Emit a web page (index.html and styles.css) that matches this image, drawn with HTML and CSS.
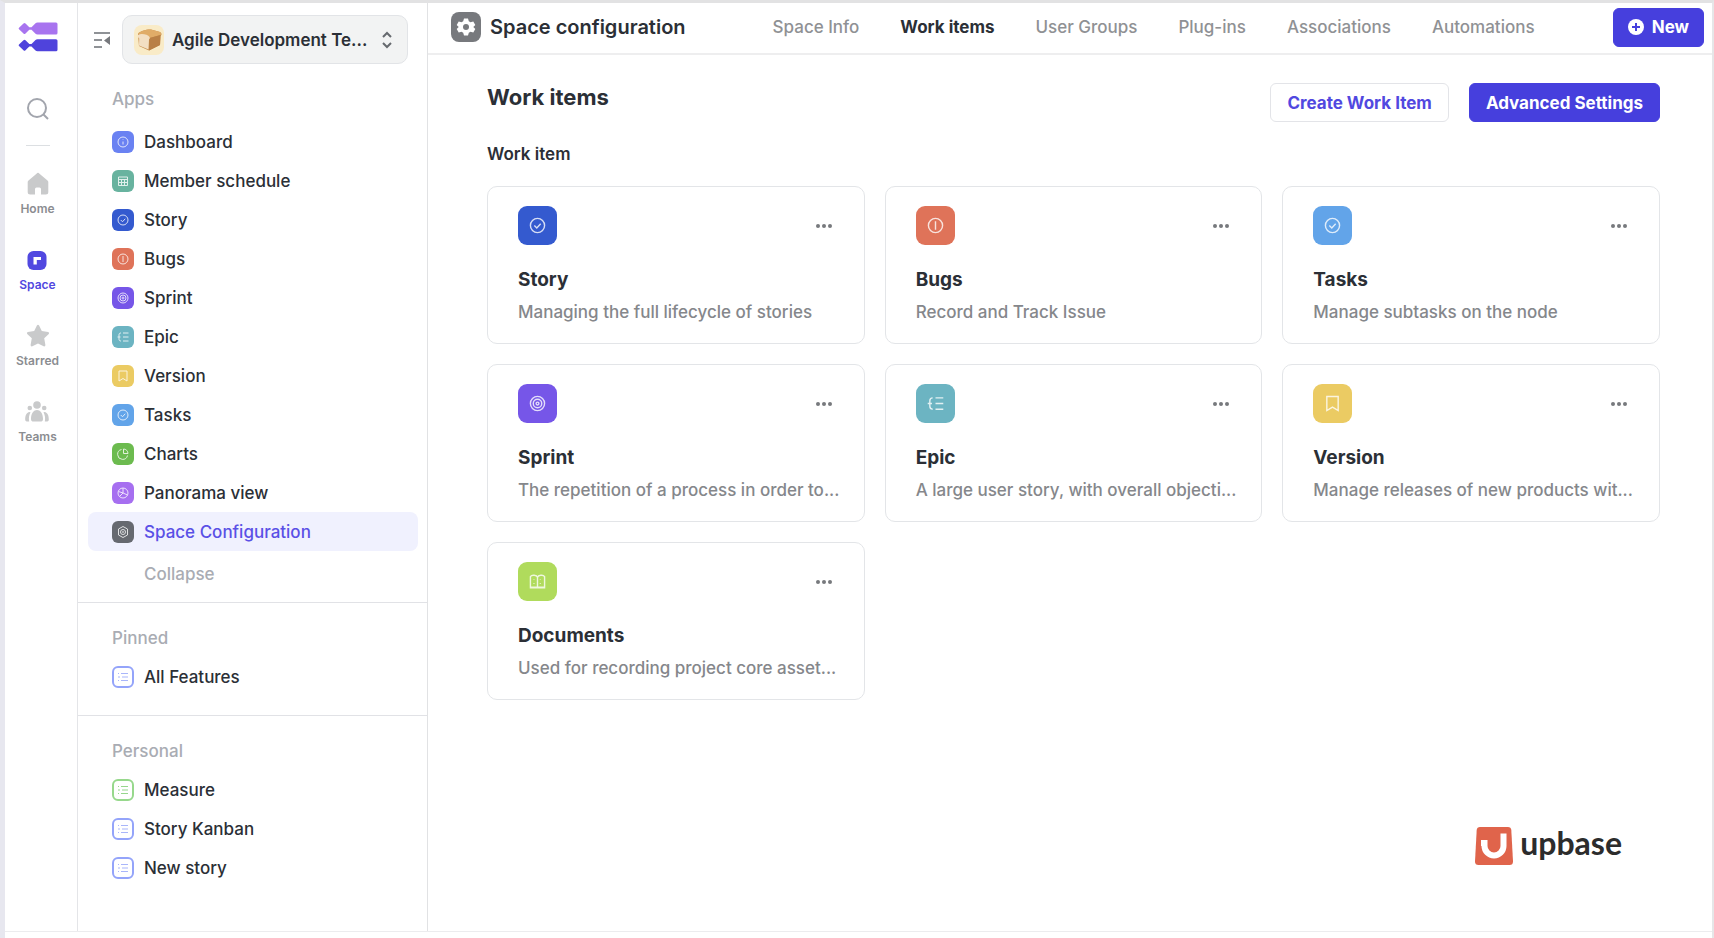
FILE: index.html
```html
<!DOCTYPE html>
<html lang="en">

<head>
    <meta charset="UTF-8">
    <meta name="viewport" content="width=device-width, initial-scale=1.0">
    <title>Space configuration</title>
    <link rel="stylesheet" href="styles.css">
</head>

<body>
    <!-- Shared icon shapes -->
    <svg class="icon-defs" aria-hidden="true">
        <symbol id="i-info" viewBox="0 0 24 24"><circle cx="12" cy="12" r="10"/><path d="M12 11v6M12 7v1"/></symbol>
        <symbol id="i-calendar" viewBox="0 0 24 24"><path d="M3 4h18v17H3zM3 9h18M3 15h18M9 9v12M15 9v12"/></symbol>
        <symbol id="i-check" viewBox="0 0 24 24"><circle cx="12" cy="12" r="10"/><path d="M7.500 12l3.500 3.500 5.500-6"/></symbol>
        <symbol id="i-alert" viewBox="0 0 24 24"><circle cx="12" cy="12" r="10"/><path d="M12 6v12"/></symbol>
        <symbol id="i-target" viewBox="0 0 24 24"><circle cx="12" cy="12" r="10"/><circle cx="12" cy="12" r="6"/><circle cx="12" cy="12" r="2"/></symbol>
        <symbol id="i-tree" viewBox="0 0 24 24"><path d="M8 4c-3 0-4 1-4 4v8c0 3 1 4 4 4M1 12h6M12 4h11M12 12h11M12 20h11"/></symbol>
        <symbol id="i-bookmark" viewBox="0 0 24 24"><path d="M4 2h16v20l-8-5-8 5z"/></symbol>
        <symbol id="i-pie" viewBox="0 0 24 24"><path d="M9 3a10 10 0 1 0 12 12M13 2v9h9a9 9 0 0 0-9-9z"/></symbol>
        <symbol id="i-panorama" viewBox="0 0 24 24"><circle cx="12" cy="12" r="10"/><path d="M12 2v10l9 4M12 12l-7 7M3 9l9 3"/></symbol>
        <symbol id="i-hex" viewBox="0 0 24 24"><path d="M12 1l9 5v12l-9 5-9-5V6z"/><circle cx="12" cy="12" r="5"/><circle cx="12" cy="12" r="1"/></symbol>
        <symbol id="i-list" viewBox="0 0 24 24"><path d="M2 5h2M8 5h14M2 12h4M10 12h12M2 19h2M8 19h14"/></symbol>
        <symbol id="i-book" viewBox="0 0 24 24"><path d="M12 20V6c-1-3-8-4-10-1v15h20V5c-2-3-9-2-10 1M1 21h22M7 9v1M7 14v1M16 9v1M16 14v1"/></symbol>
        <symbol id="i-dots" viewBox="0 0 18 6"><circle cx="3" cy="3" r="2"/><circle cx="9" cy="3" r="2"/><circle cx="15" cy="3" r="2"/></symbol>
    </svg>

    <div class="app">
        <nav class="rail" aria-label="Main">
            <a class="brand" href="#" aria-label="Home page">
                <svg viewBox="0 0 40 30" width="40" height="30">
                    <path fill="#a874ef" d="M5.500 1.500q1-1 2 0l3.800 3.800h2.200L17.500 1.300q.8-.8 2-.8H38q1.500 0 1.500 1.500v9q0 1.500-1.500 1.500H19.500q-1.200 0-2-.8L13.500 7.700h-2.200L7.500 11.500q-1 1-2 0L1 7.300q-.8-.8 0-1.600z"/>
                    <path fill="#4f43dc" d="M5.500 18.200q1-1 2 0l3.800 3.800h2.200L17.500 18q.8-.8 2-.8H38q1.500 0 1.500 1.500v9q0 1.500-1.500 1.500H19.500q-1.200 0-2-.8L13.500 24.400h-2.200L7.500 28.200q-1 1-2 0L1 24q-.8-.8 0-1.600z"/>
                </svg>
            </a>
            <button class="rail-search" type="button" aria-label="Search">
                <svg viewBox="0 0 24 24" width="24" height="24"><circle cx="11" cy="11" r="9"/><path d="M17.500 17.500L22 22"/></svg>
            </button>
            <a class="rail-item" href="#">
                <svg viewBox="0 0 24 24" width="24" height="24"><path d="M10.500 1.700a2 2 0 0 1 3 0l8 6.800a2 2 0 0 1 .8 1.600V20a2.500 2.500 0 0 1-2.500 2.500H15V17a1.500 1.500 0 0 0-1.500-1.500h-3A1.500 1.500 0 0 0 9 17v5.500H4.200A2.500 2.500 0 0 1 1.700 20v-9.900a2 2 0 0 1 .8-1.600z"/></svg>
                <span>Home</span>
            </a>
            <a class="rail-item active" href="#">
                <svg viewBox="0 0 24 24" width="24" height="24"><rect x="2.500" y="3" width="19" height="19" rx="6"/><path fill="#fff" d="M8.500 9h7.500v3h-4.200v4.500H8.500z"/></svg>
                <span>Space</span>
            </a>
            <a class="rail-item" href="#">
                <svg viewBox="0 0 24 24" width="24" height="24"><path d="M10.900 1.500q1.100-1.400 2.200 0l2.700 5.600 6.300.9q1.700.5.700 1.900l-4.600 4.400 1.200 6.700q0 1.800-1.800 1.300L12 19.500l-5.600 2.800q-1.800.5-1.800-1.300l1.200-6.700L1.200 9.900q-1-1.400.7-1.900l6.300-.9z"/></svg>
                <span>Starred</span>
            </a>
            <a class="rail-item" href="#">
                <svg viewBox="0 0 24 24" width="24" height="24"><circle cx="12" cy="5" r="3.800"/><circle cx="4.800" cy="8" r="2.300"/><circle cx="19.200" cy="8" r="2.300"/><path d="M6 19c0-12 12-12 12 0 0 2-1 2.500-2.500 2.500h-7C7 21.500 6 21 6 19zM4.600 12C1 12.500.2 16 .2 19.500c0 1.500.8 2 2.600 2h1.400C3.500 18 4 15 5.500 12.200zM19.400 12c3.600.5 4.400 4 4.400 7.500 0 1.500-.8 2-2.600 2h-1.400c.7-3.500.2-6.500-1.300-9.300z"/></svg>
                <span>Teams</span>
            </a>
        </nav>

        <aside class="sidebar">
            <div class="sidebar-top">
                <button class="fold" type="button" aria-label="Fold sidebar">
                    <svg viewBox="0 0 18 18" width="18" height="18"><path d="M1 2h16M1 9h8M1 16h8" fill="none" stroke="#8f9296" stroke-width="2"/><path d="M17 5v9l-6-4.500z" fill="#77797d"/></svg>
                </button>
                <button class="switcher" type="button">
                    <svg viewBox="0 0 30 30" width="30" height="30">
                        <rect width="30" height="30" rx="8" fill="#f9ebc7"/>
                        <path fill="#c58a49" d="M4 9c1-3 10-5 13-4.500l9 2.500c2 1 2 3 .5 4L26 20l-11 5.500L5 21z"/>
                        <path fill="#e0ac68" d="M4 9c1-3 10-5 13-4.500l9 2.500c1 .8 1.500 2 .5 3L16 13z"/>
                        <path fill="#b98046" d="M15.500 13l11-3L26 20l-11 5.500z"/>
                        <path fill="#f3dfc3" d="M4 10c3-2 10-.5 11.500 2 .6 1 .2 2-.5 2.500l-.5 10L5 20.500l.2-7C4 12.500 3.500 11 4 10z"/>
                    </svg>
                    <span>Agile Development Te...</span>
                    <svg viewBox="0 0 12 18" width="12" height="18"><path d="M2 6l4-4 4 4M2 12l4 4 4-4" fill="none" stroke="#66696e" stroke-width="2"/></svg>
                </button>
            </div>

            <section class="menu apps">
                <h2>Apps</h2>
                <ul>
                    <li><a href="#"><span class="tile indigo"><svg><use href="#i-info"/></svg></span>Dashboard</a></li>
                    <li><a href="#"><span class="tile teal"><svg><use href="#i-calendar"/></svg></span>Member schedule</a></li>
                    <li><a href="#"><span class="tile blue"><svg><use href="#i-check"/></svg></span>Story</a></li>
                    <li><a href="#"><span class="tile red"><svg><use href="#i-alert"/></svg></span>Bugs</a></li>
                    <li><a href="#"><span class="tile violet"><svg><use href="#i-target"/></svg></span>Sprint</a></li>
                    <li><a href="#"><span class="tile cyan"><svg><use href="#i-tree"/></svg></span>Epic</a></li>
                    <li><a href="#"><span class="tile yellow"><svg><use href="#i-bookmark"/></svg></span>Version</a></li>
                    <li><a href="#"><span class="tile sky"><svg><use href="#i-check"/></svg></span>Tasks</a></li>
                    <li><a href="#"><span class="tile green"><svg><use href="#i-pie"/></svg></span>Charts</a></li>
                    <li><a href="#"><span class="tile purple"><svg><use href="#i-panorama"/></svg></span>Panorama view</a></li>
                    <li><a class="active" href="#"><span class="tile gray"><svg><use href="#i-hex"/></svg></span>Space Configuration</a></li>
                </ul>
                <button class="collapse" type="button">Collapse</button>
            </section>

            <section class="menu">
                <h2>Pinned</h2>
                <ul>
                    <li><a href="#"><span class="tile outline"><svg><use href="#i-list"/></svg></span>All Features</a></li>
                </ul>
            </section>

            <section class="menu">
                <h2>Personal</h2>
                <ul>
                    <li><a href="#"><span class="tile outline mint"><svg><use href="#i-list"/></svg></span>Measure</a></li>
                    <li><a href="#"><span class="tile outline"><svg><use href="#i-list"/></svg></span>Story Kanban</a></li>
                    <li><a href="#"><span class="tile outline"><svg><use href="#i-list"/></svg></span>New story</a></li>
                </ul>
            </section>
        </aside>

        <main class="main">
            <header class="topbar">
                <svg class="gear" viewBox="0 0 30 30" width="30" height="30">
                    <rect width="30" height="30" rx="8" fill="#77797d"/>
                    <path fill="#fff" d="M13 6.500h4l.8 2.700 1.700 1 2.800-.7 2 3.500-2 2 0 0 2 2-2 3.500-2.800-.7-1.700 1-.8 2.700h-4l-.8-2.700-1.700-1-2.800.7-2-3.500 2-2-2-2 2-3.500 2.800.7 1.700-1z"/>
                    <circle cx="15" cy="15" r="3" fill="#77797d"/>
                </svg>
                <h1>Space configuration</h1>
                <nav class="tabs" aria-label="Configuration">
                    <a href="#">Space Info</a>
                    <a class="active" href="#">Work items</a>
                    <a href="#">User Groups</a>
                    <a href="#">Plug-ins</a>
                    <a href="#">Associations</a>
                    <a href="#">Automations</a>
                </nav>
                <button class="btn primary new" type="button">
                    <svg viewBox="0 0 16 16" width="16" height="16"><circle cx="8" cy="8" r="8" fill="#fff"/><path d="M8 4v8M4 8h8" stroke="#463fdd" stroke-width="2"/></svg>
                    New
                </button>
            </header>

            <div class="content">
                <div class="page-head">
                    <h2>Work items</h2>
                    <div class="actions">
                        <button class="btn" type="button">Create Work Item</button>
                        <button class="btn primary" type="button">Advanced Settings</button>
                    </div>
                </div>

                <h3 class="group-title">Work item</h3>
                <div class="cards">
                    <article class="card">
                        <div class="card-top">
                            <span class="tile large blue"><svg><use href="#i-check"/></svg></span>
                            <button class="more" type="button" aria-label="More"><svg><use href="#i-dots"/></svg></button>
                        </div>
                        <h4>Story</h4>
                        <p>Managing the full lifecycle of stories</p>
                    </article>
                    <article class="card">
                        <div class="card-top">
                            <span class="tile large red"><svg><use href="#i-alert"/></svg></span>
                            <button class="more" type="button" aria-label="More"><svg><use href="#i-dots"/></svg></button>
                        </div>
                        <h4>Bugs</h4>
                        <p>Record and Track Issue</p>
                    </article>
                    <article class="card">
                        <div class="card-top">
                            <span class="tile large sky"><svg><use href="#i-check"/></svg></span>
                            <button class="more" type="button" aria-label="More"><svg><use href="#i-dots"/></svg></button>
                        </div>
                        <h4>Tasks</h4>
                        <p>Manage subtasks on the node</p>
                    </article>
                    <article class="card">
                        <div class="card-top">
                            <span class="tile large violet"><svg><use href="#i-target"/></svg></span>
                            <button class="more" type="button" aria-label="More"><svg><use href="#i-dots"/></svg></button>
                        </div>
                        <h4>Sprint</h4>
                        <p>The repetition of a process in order to...</p>
                    </article>
                    <article class="card">
                        <div class="card-top">
                            <span class="tile large cyan"><svg><use href="#i-tree"/></svg></span>
                            <button class="more" type="button" aria-label="More"><svg><use href="#i-dots"/></svg></button>
                        </div>
                        <h4>Epic</h4>
                        <p>A large user story, with overall objecti...</p>
                    </article>
                    <article class="card">
                        <div class="card-top">
                            <span class="tile large yellow"><svg><use href="#i-bookmark"/></svg></span>
                            <button class="more" type="button" aria-label="More"><svg><use href="#i-dots"/></svg></button>
                        </div>
                        <h4>Version</h4>
                        <p>Manage releases of new products wit...</p>
                    </article>
                    <article class="card">
                        <div class="card-top">
                            <span class="tile large lime"><svg><use href="#i-book"/></svg></span>
                            <button class="more" type="button" aria-label="More"><svg><use href="#i-dots"/></svg></button>
                        </div>
                        <h4>Documents</h4>
                        <p>Used for recording project core asset...</p>
                    </article>
                </div>
            </div>

            <footer class="upbase">
                <svg viewBox="0 0 38 38" width="38" height="38">
                    <path fill="#e0644b" d="M5 0h28q3 0 3.300 3L38 34.500q0 3.500-3.500 3.500h-31Q0 38 0 34.500L1.700 3Q2 0 5 0z"/>
                    <path fill="none" stroke="#fff" stroke-width="6" d="M6 16h3.500v3a9.500 9.500 0 0 0 19 0V6.500"/>
                </svg>
                <span>upbase</span>
            </footer>
        </main>
    </div>
</body>

</html>
```
FILE: styles.css
```css
* {
    box-sizing: border-box;
}

body {
    margin: 0;
    padding-bottom: 6px;
    border-top: 3px solid #e2e2e3;
    border-left: 5px solid #e7e7ef;
    border-right: 2px solid #e6e6e8;
    background: #fff;
    color: #2b2f36;
    font-family: Inter, "Open Sans", sans-serif;
    font-size: 17px;
    font-weight: 500;
    line-height: 24px;
    min-height: 100vh;
    display: flex;
}

h1,
h2,
h3,
h4,
p,
ul {
    margin: 0;
    padding: 0;
}

ul {
    list-style: none;
}

a {
    color: inherit;
    text-decoration: none;
}

button {
    font: inherit;
    color: inherit;
    background: none;
    border: none;
    padding: 0;
    cursor: pointer;
}

svg {
    display: block;
    flex-shrink: 0;
}

.icon-defs {
    position: absolute;
    width: 0;
    height: 0;
}

.app {
    flex: 1;
    display: flex;
    border-bottom: 1px solid #ececee;
}

/* Left rail */
.rail {
    width: 73px;
    flex-shrink: 0;
    border-right: 1px solid #e4e5e8;
    display: flex;
    flex-direction: column;
    align-items: center;
    padding: 19px 7px 0 0;
}

.rail-search {
    margin-top: 45px;
    padding-bottom: 24px;
    border-bottom: 1px solid #dcdfe2;
}

.rail-search svg {
    fill: none;
    stroke: #a2a5ad;
    stroke-width: 2;
}

.rail-item {
    display: flex;
    flex-direction: column;
    align-items: center;
    gap: 5px;
    height: 76px;
    font-size: 12px;
    font-weight: 600;
    line-height: 16px;
    color: #8b8d91;
}

.rail-search + .rail-item {
    margin-top: 26px;
}

.rail-item svg {
    fill: #c9cacb;
}

.rail-item.active {
    color: #5148e0;
}

.rail-item.active svg {
    fill: #5148e0;
}

/* Sidebar */
.sidebar {
    width: 350px;
    flex-shrink: 0;
    border-right: 1px solid #e1e2e4;
}

.sidebar-top {
    display: flex;
    align-items: center;
    gap: 11px;
    padding: 12px 19px 12px 15px;
}

.switcher {
    flex: 1;
    height: 49px;
    display: flex;
    align-items: center;
    gap: 8px;
    padding: 0 14px 0 11px;
    background: #f2f3f3;
    border: 1px solid #e2e4e7;
    border-radius: 10px;
    font-weight: 600;
    white-space: nowrap;
}

.switcher span {
    flex: 1;
    text-align: left;
}

.menu {
    padding: 21px 9px 19px 10px;
}

.menu.apps {
    padding-top: 9px;
    padding-bottom: 16px;
}

.menu + .menu {
    border-top: 1px solid #e1e2e6;
}

.menu h2 {
    margin-bottom: 5px;
    padding: 0 24px;
    font-size: 17px;
    font-weight: 500;
    line-height: 28px;
    color: #a9acb3;
}

.menu.apps h2 {
    margin-bottom: 9px;
}

.menu li a {
    display: flex;
    align-items: center;
    gap: 10px;
    height: 39px;
    padding: 0 24px;
    border-radius: 8px;
}

.menu li a.active {
    background: #f0f1fe;
    color: #5a50e6;
}

.collapse {
    display: block;
    margin: 11px 0 0 56px;
    color: #a9acb3;
}

/* Coloured icon tiles */
.tile {
    width: 22px;
    height: 22px;
    flex-shrink: 0;
    border-radius: 6px;
    display: flex;
    align-items: center;
    justify-content: center;
}

.tile svg {
    width: 12px;
    height: 12px;
    fill: none;
    stroke: #fff;
    stroke-width: 2;
    opacity: 0.8;
}

.tile.large {
    width: 39px;
    height: 39px;
    border-radius: 9px;
}

.tile.large svg {
    width: 17px;
    height: 17px;
}

.indigo { background: #6a82f2; }
.teal { background: #68b39f; }
.blue { background: #345acf; }
.red { background: #df7359; }
.violet { background: #7656e8; }
.cyan { background: #6cb4c2; }
.yellow { background: #ebcb63; }
.sky { background: #62a4e9; }
.green { background: #6cbb4f; }
.purple { background: #a66ff0; }
.gray { background: #666970; }
.lime { background: #b0db5c; }

.tile.outline {
    border: 2px solid #94a4fa;
}

.tile.outline svg {
    stroke: #94a4fa;
}

.tile.outline.mint {
    border-color: #97d88c;
}

.tile.outline.mint svg {
    stroke: #7ccc70;
}

/* Main area */
.main {
    flex: 1;
    min-width: 0;
    display: flex;
    flex-direction: column;
}

.topbar {
    display: flex;
    align-items: center;
    height: 52px;
    padding: 0 8px 2px 23px;
    border-bottom: 2px solid #eeeeef;
    white-space: nowrap;
}

.topbar h1 {
    margin-left: 9px;
    font-size: 20px;
    font-weight: 600;
}

.tabs {
    display: flex;
    gap: 41px;
    margin-left: 87px;
    color: #8f9194;
}

.tabs .active {
    color: #2b2f36;
    font-weight: 700;
}

.btn {
    height: 39px;
    padding: 0 16px;
    border: 1px solid #e3e4e8;
    border-radius: 6px;
    color: #5148e0;
    font-weight: 700;
    white-space: nowrap;
}

.btn.primary {
    background: #463fdd;
    border-color: #463fdd;
    color: #fff;
}

.btn.new {
    display: flex;
    align-items: center;
    gap: 8px;
    margin-left: auto;
    padding: 0 14px;
}

.content {
    padding: 28px 52px 0 59px;
}

.page-head {
    display: flex;
    justify-content: space-between;
}

.page-head h2 {
    font-size: 22px;
    font-weight: 700;
    line-height: 28px;
}

.actions {
    display: flex;
    gap: 20px;
}

.group-title {
    margin: 20px 0;
    font-size: 17px;
    font-weight: 600;
}

.cards {
    display: grid;
    grid-template-columns: repeat(3, 1fr);
    gap: 20px;
}

.card {
    min-height: 158px;
    padding: 19px 20px 0 30px;
    border: 1px solid #e3e5e8;
    border-radius: 10px;
    min-width: 0;
}

.card-top {
    display: flex;
    align-items: center;
    justify-content: space-between;
    padding-right: 11px;
}

.more svg {
    width: 18px;
    height: 6px;
    fill: #77797d;
}

.card h4 {
    margin-top: 21px;
    font-size: 19px;
    font-weight: 700;
    line-height: 28px;
}

.card p {
    margin-top: 6px;
    color: #85878b;
    white-space: nowrap;
}

.upbase {
    display: flex;
    align-items: flex-start;
    gap: 7px;
    margin: auto 90px 66px auto;
    font-family: Lato, sans-serif;
    font-size: 32px;
    font-weight: 700;
    line-height: 32px;
    color: #2c2c2c;
}
```
